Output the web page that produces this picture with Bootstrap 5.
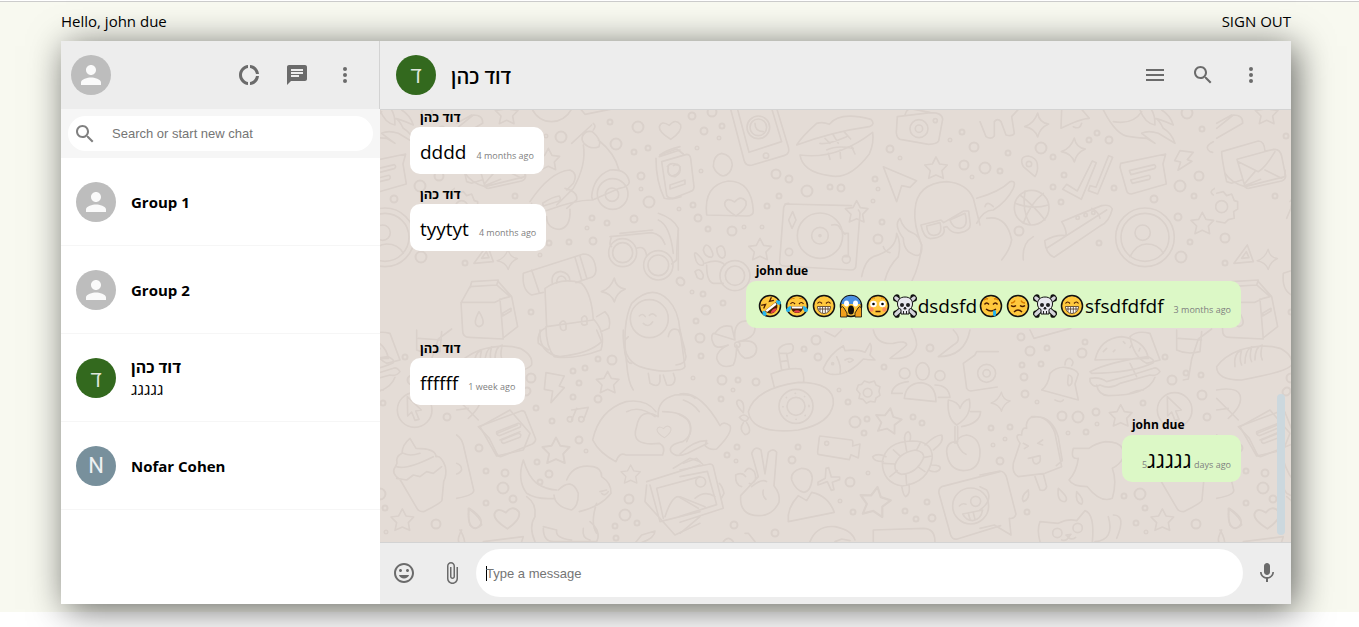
<!DOCTYPE html>
<html lang="en">
<head>
<meta charset="utf-8">
<meta name="viewport" content="width=device-width, initial-scale=1">
<title>Chat</title>
<link href="https://cdn.jsdelivr.net/npm/bootstrap@5.3.0/dist/css/bootstrap.min.css" rel="stylesheet">
<style>
  body { font-family: "Open Sans", "Noto Sans", "Liberation Sans", sans-serif; color: #000; background: #fff; height: 100vh; overflow: hidden; padding-top: 1px; }
  .page-band { background: #f8f9f0; border-top: 1px solid #ccc; padding: 0 68px 8px 61px; }
  .top-line { height: 39px; font-size: 15px; }
  .top-line a { color: #000; }
  .chat-app { height: calc(100vh - 64px); box-shadow: 5px 5px 34px rgba(0, 0, 0, .6); background: #ededed; }
  .side-pane { flex: 0 0 319px; }
  .side-head { height: 68px; padding: 0 10px; border-right: 1px solid #d3d3d3; background: #ededed; }
  .icon-btn { width: 48px; height: 48px; padding: 12px; border: 0; background: none; color: #6b6b6b; line-height: 0; }
  .icon-btn svg, .search-box svg { width: 24px; height: 24px; fill: currentColor; }
  .face { width: 40px; height: 40px; flex: none; background: #bdbdbd; color: #fafafa; }
  .face svg { width: 30px; height: 30px; fill: currentColor; }
  .face-green { background: #33691e; color: #dfe6dc; font-size: 22px; }
  .face-blue { background: #78909c; color: #eef1f3; font-family: Roboto, sans-serif; font-size: 22px; }
  .search-row { background: #f6f6f6; padding: 7px; height: 49px; }
  .search-box { color: #808080; padding-left: 5px; }
  .plain-input { border: 0; outline: 0; background: none; font-family: "Liberation Sans", Arial, sans-serif; font-size: 13px; min-width: 0; color: #000; }
  .plain-input::placeholder { color: #757575; opacity: 1; }
  .search-box .plain-input { margin-left: 13px; }
  .contact { height: 88px; padding: 0 15px; gap: 15px; border-bottom: 1px solid #f6f6f6; color: #000; text-decoration: none; font-size: 15px; line-height: 22px; }
  .contact :lang(he) { font-size: 16px; }
  .talk-head { height: 69px; padding: 0 16px; border-bottom: 1px solid #d3d3d3; }
  .talk-head h1 { font-size: 20px; margin: 4px 0 0 15px; }
  .talk { background: #e4dcd6; min-height: 0; }
  .doodles { inset: 0; width: 100%; height: 100%; }
  .messages { padding: 0 50px 60px 30px; gap: 10px; min-height: 0; }
  .sender { font-size: 12px; font-weight: 700; line-height: 20px; padding-left: 10px; }
  .sender:lang(he) { font-size: 13px; }
  .bubble { height: 47px; padding: 10px; border-radius: 10px; background: #fff; font-size: 19px; line-height: 30px; margin: 0; white-space: nowrap; }
  .bubble:lang(he) { font-size: 22px; line-height: 28px; }
  .bubble time { font-size: 9px; color: #808080; margin-left: 10px; }
  .mine .bubble { background: #dcf8c6; }
  .emo { width: 24px; height: 24px; margin: 0 1px 0 2px; vertical-align: -5px; }
  .thumb { right: 6px; bottom: 7px; width: 8px; height: 141px; border-radius: 4px; background: #ccd8de; }
  .composer { height: 62px; padding-bottom: 1px; border-top: 1px solid #d3d3d3; }
  .composer .plain-input { height: 48px; border-radius: 30px; background: #fff; padding: 0 10px; }
  .composer .plain-input:placeholder-shown { background: linear-gradient(#000, #000) 10px 50% / 1px 15px no-repeat #fff; caret-color: transparent; }
</style>
</head>
<body>
<svg width="0" height="0" class="position-absolute" aria-hidden="true">
  <defs>
    <symbol id="i-person" viewBox="0 0 24 24"><path d="M12 12c2.21 0 4-1.79 4-4s-1.79-4-4-4-4 1.79-4 4 1.790 4 4 4zm0 2c-2.670 0-8 1.340-8 4v2h16v-2c0-2.660-5.330-4-8-4z"/></symbol>
    <symbol id="i-donut" viewBox="0 0 24 24"><path d="M11 5.080V2c-5 .5-9 4.810-9 10s4 9.500 9 10v-3.080c-3-.48-6-3.400-6-6.920s3-6.440 6-6.920zM18.970 11H22c-.47-5-4-8.530-9-9v3.080C16 5.510 18.540 8 18.970 11zM13 18.920V22c5-.47 8.530-4 9-9h-3.030c-.43 3-2.970 5.490-5.970 5.920z"/></symbol>
    <symbol id="i-chat" viewBox="0 0 24 24"><path d="M20 2H4c-1.100 0-1.990.9-1.990 2L2 22l4-4h14c1.100 0 2-.9 2-2V4c0-1.100-.9-2-2-2zM6 9h12v2H6V9zm8 5H6v-2h8v2zm4-6H6V6h12v2z"/></symbol>
    <symbol id="i-more" viewBox="0 0 24 24"><circle cx="12" cy="6" r="2"/><circle cx="12" cy="12" r="2"/><circle cx="12" cy="18" r="2"/></symbol>
    <symbol id="i-search" viewBox="0 0 24 24"><path d="M15.500 14h-.79l-.28-.27C15.410 12.590 16 11.110 16 9.500 16 5.910 13.090 3 9.500 3S3 5.910 3 9.500 5.910 16 9.500 16c1.610 0 3.090-.59 4.230-1.570l.27.28v.79l5 4.990L20.490 19l-4.990-5zm-6 0C7.010 14 5 11.990 5 9.500S7.010 5 9.500 5 14 7.010 14 9.500 11.990 14 9.500 14z"/></symbol>
    <symbol id="i-menu" viewBox="0 0 24 24"><path d="M3 18h18v-2H3v2zm0-5h18v-2H3v2zm0-7v2h18V6H3z"/></symbol>
    <symbol id="i-smile" viewBox="0 0 24 24"><path d="M11.990 2C6.470 2 2 6.480 2 12s4.470 10 9.990 10C17.520 22 22 17.520 22 12S17.520 2 11.990 2zM12 20c-4.420 0-8-3.580-8-8s3.580-8 8-8 8 3.580 8 8-3.580 8-8 8zm3.500-9c.83 0 1.500-.67 1.500-1.500S16.330 8 15.500 8 14 8.670 14 9.500s.67 1.500 1.500 1.500zm-7 0c.83 0 1.500-.67 1.500-1.500S9.330 8 8.500 8 7 8.670 7 9.500 7.670 11 8.500 11zm3.500 6.500c2.330 0 4.310-1.460 5.110-3.500H6.890c.8 2.040 2.780 3.500 5.110 3.500z"/></symbol>
    <symbol id="i-clip" viewBox="0 0 24 24"><path d="M16.500 6v11.500c0 2.210-1.790 4-4 4s-4-1.790-4-4V5c0-1.380 1.120-2.500 2.500-2.500s2.500 1.120 2.500 2.500v10.500c0 .55-.45 1-1 1s-1-.45-1-1V6H10v9.500c0 1.380 1.120 2.500 2.500 2.500s2.500-1.120 2.500-2.500V5c0-2.210-1.790-4-4-4S7 2.790 7 5v12.500c0 3.040 2.460 5.500 5.500 5.500s5.500-2.460 5.500-5.500V6h-1.500z"/></symbol>
    <symbol id="i-mic" viewBox="0 0 24 24"><path d="M12 14c1.660 0 2.990-1.340 2.990-3L15 5c0-1.660-1.340-3-3-3S9 3.340 9 5v6c0 1.660 1.340 3 3 3zm5.300-3c0 3-2.540 5.100-5.300 5.100S6.700 14 6.700 11H5c0 3.410 2.720 6.230 6 6.720V21h2v-3.280c3.280-.48 6-3.300 6-6.720h-1.700z"/></symbol>

    <symbol id="e-disc" viewBox="0 0 24 24"><circle cx="12" cy="12" r="10.500" fill="#ffc83d" stroke="#111" stroke-width="1.500"/></symbol>
    <symbol id="e-rofl" viewBox="0 0 24 24"><use href="#e-disc"/><g transform="rotate(-38 12 12)"><path d="M5 12.500h14c0 4-3 7-7 7s-7-3-7-7z" fill="#4b1c00"/><path d="M5.500 12.500h13l-.6 2.500H6z" fill="#fff"/><path d="M8 18q4-3 8 0-4 3-8 0z" fill="#e8434c"/><path d="M5.500 6l4 2-4 2M18.500 6l-4 2 4 2" fill="none" stroke="#4b1c00" stroke-width="1.300"/><path d="M1 14q3-5 4 0 0 3-2 3T1 14zM23 14q-3-5-4 0 0 3 2 3t2-3z" fill="#26b5ef"/></g></symbol>
    <symbol id="e-joy" viewBox="0 0 24 24"><use href="#e-disc"/><path d="M6 12.500h12c0 4-2.500 6.500-6 6.500s-6-2.500-6-6.500z" fill="#4b1c00"/><path d="M6.500 12.500h11l-.5 2H7z" fill="#fff"/><path d="M8.500 17.500q3.500-2.500 7 0-3.500 2.500-7 0z" fill="#e8434c"/><path d="M5.500 10q2-3 4.500 0M14 10q2.500-3 4.500 0" fill="none" stroke="#4b1c00" stroke-width="1.200"/><path d="M5.500 5.500q2-2 4-1M18.500 5.500q-2-2-4-1" fill="none" stroke="#d67d00"/><path d="M1 16q2-4 5-4 0 6-3 6-2 0-2-2zM23 16q-2-4-5-4 0 6 3 6 2 0 2-2z" fill="#26b5ef"/></symbol>
    <symbol id="e-grin" viewBox="0 0 24 24"><use href="#e-disc"/><path d="M5.500 12.500h13c0 4.500-3 7-6.500 7s-6.500-2.500-6.500-7z" fill="#fff" stroke="#4b3420" stroke-width=".8"/><path d="M6 15h12M8 13v5M10.600 13v6M13.300 13v6M16 13v5" stroke="#4b3420" stroke-width=".8"/><path d="M5.500 9.500q2-3 4.500 0M14 9.500q2.500-3 4.500 0" fill="none" stroke="#4b1c00" stroke-width="1.200"/></symbol>
    <symbol id="e-scream" viewBox="0 0 24 24"><use href="#e-disc"/><path d="M2.300 10C3 4.500 7 1.800 12 1.800s9 2.700 9.700 8.200z" fill="#4a90e2"/><ellipse cx="7.500" cy="9.500" rx="2.500" ry="3" fill="#fff"/><ellipse cx="16.500" cy="9.500" rx="2.500" ry="3" fill="#fff"/><ellipse cx="12" cy="16" rx="3" ry="4.500" fill="#15100c"/><path d="M1.500 23v-9q2-3 3.500 0l3 5v4zM22.500 23v-9q-2-3-3.500 0l-3 5v4z" fill="#f2a01c" stroke="#111" stroke-width=".8"/></symbol>
    <symbol id="e-flush" viewBox="0 0 24 24"><use href="#e-disc"/><circle cx="7.500" cy="10" r="3.300" fill="#fff"/><circle cx="16.500" cy="10" r="3.300" fill="#fff"/><circle cx="7.500" cy="10" r="1.300"/><circle cx="16.500" cy="10" r="1.300"/><circle cx="5.500" cy="15.500" r="2.200" fill="#ff8a5c"/><circle cx="18.500" cy="15.500" r="2.200" fill="#ff8a5c"/><path d="M9.500 17.500h5" stroke="#4b1c00" stroke-width="1.500"/><path d="M5 5q2-2 4-1M19 5q-2-2-4-1" fill="none" stroke="#d67d00"/></symbol>
    <symbol id="e-skull" viewBox="0 0 24 24"><path d="M3 4l18 16M21 4L3 20" stroke="#111" stroke-width="5.500" stroke-linecap="round"/><g fill="#111"><circle cx="4" cy="2.800" r="2.600"/><circle cx="2.600" cy="5" r="2.500"/><circle cx="20" cy="2.800" r="2.600"/><circle cx="21.400" cy="5" r="2.500"/><circle cx="4" cy="21.200" r="2.600"/><circle cx="2.600" cy="19" r="2.500"/><circle cx="20" cy="21.200" r="2.600"/><circle cx="21.400" cy="19" r="2.500"/></g><path d="M3 4l18 16M21 4L3 20" stroke="#d6d6dc" stroke-width="3.500" stroke-linecap="round"/><path d="M12 3c5 0 7.500 3 7.500 7 0 3-1.500 4.500-3.500 5.500V20H8v-4.500C6 14.500 4.500 13 4.500 10c0-4 2.500-7 7.500-7z" fill="#e9e9ee" stroke="#111" stroke-width="1"/><circle cx="9" cy="11" r="2" fill="#222"/><circle cx="15" cy="11" r="2" fill="#222"/><path d="M12 13l1.200 2h-2.400zM10.500 17v3M13.500 17v3" stroke="#222"/></symbol>
    <symbol id="e-drool" viewBox="0 0 24 24"><use href="#e-disc"/><path d="M5.500 10.500q2-3 4.500 0M14 10.500q2.500-3 4.500 0M7 15q5 4 10 0" fill="none" stroke="#4b1c00" stroke-width="1.400"/><path d="M5 6q2-2 4-1M19 6q-2-2-4-1" fill="none" stroke="#d67d00" stroke-width="1.400"/><path d="M14 16.500h3v4.500q-1.500 2.500-3 0z" fill="#26b5ef"/></symbol>
    <symbol id="e-sad" viewBox="0 0 24 24"><use href="#e-disc"/><path d="M5 11.500q2.500 2 5 0M14 11.500q2.500 2 5 0M8 18q4-4 8 0" fill="none" stroke="#4b1c00" stroke-width="1.400"/><path d="M5 9q3 0 4-2.500M19 9q-3 0-4-2.500" fill="none" stroke="#d67d00" stroke-width="1.400"/></symbol>

    <path id="d-star" d="M0-33L11-12 34-9 18 8 22 31 0 21-22 31-17 8-34-9-11-12z"/>
    <path id="d-spark" d="M3-36Q8-6 36-3 10 8 3 36-6 10-36 5-8-4 3-36z"/>
    <path id="d-heart" d="M2 28Q-34 6-32-10-26-30-2-14 16-36 32-16 38 4 2 28z"/>
    <path id="d-r6" d="M561 137h0M616 144h0M638 127h0M649 202h0M807 191h0M1041 148h0M985 168h0M1180 186h0M1187 113h0M1181 257h0M855 422h0M503 488h0M625 515h0M1078 417h0M1140 494h0"/>
    <path id="d-r5" d="M712 112h0M776 174h0M974 147h0M964 165h0M732 231h0M878 239h0M1019 231h0M1199 176h0M700 338h0M722 380h0M816 340h0M850 482h0M531 378h0M612 360h0M629 499h0M1030 351h0M1082 353h0M1062 416h0M1172 380h0M1202 395h0M1196 524h0M706 310h0M465 238h0"/>
    <path id="d-r4" d="M641 176h0M634 219h0M593 241h0M692 116h0M704 131h0M789 179h0M841 188h0M890 149h0M698 218h0M681 282h0M1109 140h0M1154 199h0M1178 217h0M756 382h0M818 357h0M930 348h0M792 460h0M932 518h0M734 525h0M775 533h0M527 391h0M598 399h0M479 448h0M505 473h0M513 499h0M579 440h0M549 474h0M1021 337h0M1024 377h0M1025 394h0M1096 412h0M1000 461h0M1207 417h0M680 281h0M526 392h0"/>
    <path id="d-r3" d="M610 122h0M634 152h0M648 148h0M592 218h0M607 223h0M549 243h0M569 242h0M515 196h0M526 136h0M722 126h0M830 187h0M779 196h0M875 179h0M962 132h0M693 205h0M708 229h0M767 206h0M703 294h0M882 222h0M1008 153h0M1053 157h0M1089 140h0M1097 133h0M1064 175h0M1000 171h0M1053 187h0M1061 202h0M1099 243h0M1114 188h0M1194 196h0M1202 129h0M1190 242h0M701 356h0M738 380h0M721 399h0M804 349h0M848 402h0M884 367h0M867 419h0M864 433h0M913 417h0M922 423h0M737 447h0M727 455h0M798 447h0M853 512h0M905 511h0M916 519h0M927 502h0M991 428h0M536 408h0M552 421h0M573 371h0M585 368h0M598 359h0M579 383h0M573 397h0M486 471h0M486 503h0M537 462h0M540 482h0M637 523h0M615 526h0M616 538h0M1047 348h0M1022 365h0M1041 364h0M1085 342h0M1086 432h0M1010 427h0M1143 403h0M1186 373h0M1201 375h0M1165 357h0M1124 496h0M1145 508h0M1136 523h0M1027 512h0M465 263h0M531 312h0M696 321h0M723 303h0"/>
    <path id="d-r2" d="M641 189h0M587 228h0M546 136h0M719 138h0M697 148h0M701 171h0M878 189h0M900 158h0M950 140h0M972 177h0M679 209h0M744 227h0M762 227h0M692 292h0M873 201h0M693 378h0M733 390h0M839 390h0M736 461h0M840 501h0M868 473h0M993 445h0M586 451h0M1037 402h0M1097 424h0M1068 433h0M1005 439h0M1146 532h0M540 255h0"/>

    <pattern id="wall" x="75" y="-1" width="760" height="520" patternUnits="userSpaceOnUse">
      <g transform="translate(-455 -109)" fill="none" stroke="#dad1cb" stroke-linejoin="round" stroke-linecap="round">
        <use href="#d-r6" stroke-width="13"/><use href="#d-r6" stroke-width="9" stroke="#e4dcd6"/>
        <use href="#d-r5" stroke-width="11"/><use href="#d-r5" stroke-width="7" stroke="#e4dcd6"/>
        <use href="#d-r4" stroke-width="9"/><use href="#d-r4" stroke-width="5" stroke="#e4dcd6"/>
        <use href="#d-r3" stroke-width="7"/><use href="#d-r3" stroke-width="3" stroke="#e4dcd6"/>
        <use href="#d-r2" stroke-width="5"/><use href="#d-r2" stroke-width="2" stroke="#e4dcd6"/>
        <!-- scooter, mug, backpack, hooded figure, glasses -->
        <g transform="translate(380 30) scale(.3333)" stroke-width="5">
          <use href="#d-star" x="380" y="250"/><use href="#d-star" x="505" y="388"/>
          <path d="M455 235q20 40 60 40 40-2 60-38M600 235l15 18 90-18"/>
          <path d="M575 340l60-55M640 280q10 8 0 20M607 320q8-20 30-15 30 25 20 45-25 10-45-10-8-10-5-20zM610 345q10 60-30 130l-50 50M655 330q50 40 62 90M635 500q5-60 55-80 50-5 58 35 0 15-30 20l-80 35zM450 515q60-90 120-95 25 10 10 40l-20 20M455 520q-10 40 50 20 80-30 130-30M555 475q40 10 35 35l-30 25M488 520q30-20 50-22 10 15-10 18l-38 12zM500 560q0 35 38 38 35-5 32-60"/>
          <circle cx="698" cy="492" r="46"/><circle cx="696" cy="494" r="20"/>
          <path d="M838 380l62-20M828 385q0 70 25 120 20 5 50-5M840 375q20-15 60-25M862 410q10-15 30-5M865 410q-5 30 20 30 20-10 15-30"/>
          <path d="M835 550q45 15 60 45v125M835 570q35 15 45 100M695 620q-10 25 0 30M690 620l125-12q30 5 40 35M720 610l98-10"/>
          <circle cx="728" cy="668" r="42"/><circle cx="728" cy="668" r="30"/><circle cx="835" cy="706" r="44"/><circle cx="835" cy="706" r="31"/><path d="M770 655q25-10 30 22M895 600q-5 50-5 90l-15 12"/>
          <path d="M255 430q20 30 60 40l120-30v-20M312 468l50-20M282 700l40-55 18 50zM305 685l14-20 8 18z"/>
        </g>
        <g transform="translate(380 170) scale(.3333)" stroke-width="5">
          <use href="#d-spark" transform="translate(382 268) scale(.85)"/><use href="#d-spark" x="700" y="360"/>
          <path d="M430 310l180-58q35 0 38 50-2 20-20 22l-40 14M430 310q-5 50 25 65l35-8M455 300l22 65M585 262l20 68M600 258l20 65M517 340q-5-32 25-36 28 5 28 30M530 340q0-20 14-22 14 2 14 16M495 355q50-35 110-15 30 30 35 110L500 470zM500 470l-2 0q0 60 25 90 60 10 140-20 15-50-20-90M495 475q-25 10-20 45l30 20M650 440l25-15q20 20 12 50l-25 10M540 460q10-15 18 0v18q-10 8-16-2zM605 445q10-15 16 0v18q-10 6-16-2z"/>
          <path d="M740 580q-15-120 15-180 60-60 110-10 30 30 35 90l18 80q0 20-30 25M745 500q-18 10-10 50 5 30 20 30M740 580q5 60 20 80M865 500q5-30 30-20 10 20 20 60"/><circle cx="808" cy="446" r="57"/><path d="M778 438q10-10 18 2M808 436q10-10 20 2M790 460q15 15 28-4"/>
          <path d="M945 260q-5-20 10-5 20 20 15 30-20 5-25-25zM970 240q5-25 20-8 15 25 5 30-20 0-25-22zM1010 235q15-15 22 0 10 25-5 30-15-5-17-30zM945 305q15-15 25 10 0 20-18 8zM975 280q40-15 60 5M980 285q0 50 20 55h30"/><circle cx="1065" cy="317" r="45"/><circle cx="1065" cy="317" r="29"/>
          <path d="M245 395l25-45 80-5 5-15-80 5-5 18M350 345l40 35-20 5-25 12-102 0 5 85q0 20 20 20l102 5-10-120M355 335l40 45 18 90-45 35M297 425q25 40 0 45-22-5 0-45zM368 430l25-15v8l-25 15z"/>
          <path d="M1005 490q20-30 50-20 5 20 10 40M1065 510q-5-45 20-55 40-10 40 20 0 30-50 40 50-10 55 20 0 30-35 30-20-10-25-40 0 40-10 60-40 15-50-20 0-25 35-40-40 15-45-5-10-20 0-30z"/><circle cx="1072" cy="524" r="8"/>
        </g>
        <!-- phone, lips, camera, turntable -->
        <g transform="translate(660 100) scale(.3333)" stroke-width="5">
          <use href="#d-heart" x="30" y="90"/><use href="#d-heart" x="226" y="320" /><use href="#d-star" x="828" y="204"/><use href="#d-star" x="590" y="335"/><use href="#d-star" x="300" y="448"/>
          <path d="M210 20l42 160q5 20 25 15l95-28q20-5 12-30L350 25M232 25l35 132 98-32-30-100"/><circle cx="295" cy="82" r="34"/><circle cx="295" cy="82" r="25"/><circle cx="318" cy="167" r="8"/><path d="M285 70q0 25 25 25"/>
          <path d="M410 135q15-25 60-65 20-5 38 3 30-40 125-15 15 15-5 22Q520 95 410 135zM420 165q110 15 218-68 5 30-10 65-60 80-120 65-80-10-88-62zM495 115l15 15M520 105l15 25M552 95l20 22M480 130q20 5 80-20M505 160l5 18M540 150l2 25M575 140l10 22M500 150q30-15 80-5"/>
          <path d="M712 50l100-12q35 0 36 20l-12 65q-5 10-30 10l-85-15q-10-2-12-20zM735 45q5-20 20-18l55 10"/><circle cx="777" cy="86" r="27"/><circle cx="777" cy="86" r="11"/><circle cx="826" cy="62" r="6"/>
          <path d="M670 200l100 42-20 20-25-5-15 48zM5 185l75-22q10 0 12 12l10 85q0 12-12 15l-50 20q-18 0-20-10zM0 165l50-18 20 15M25 205q-5 25 15 22 20-5 20-25-5-15-20-5M30 255l45-15v12l-45 15z"/>
          <path d="M160 200q0-35 25-40 30 5 32 35-5 30-28 33-20-5-29-28zM140 345q-10-90 65-102 70 0 75 90 0 15-20 15z"/>
          <path d="M375 312l200 5M595 330q5 5 5 10l-12 155q0 15-15 15l-200-12q-15 0-14-15l12-160q3-13 15-13M398 335l10 25-12 25-10-25zM550 400h15v70h-15M515 375q20-5 25 10l15 18"/><circle cx="480" cy="407" r="68"/><circle cx="480" cy="407" r="25"/><circle cx="480" cy="407" r="3"/><circle cx="387" cy="456" r="11"/><circle cx="559" cy="478" r="12"/>
          <path d="M765 330q5-80 95-85 60 5 80 50l20 80M765 330q-5 40 20 105-5 60-30 110M783 375l60-15 8 8 60-35 15 0 5 40q0 20-30 25-25 5-40-18l-10 2q10 30-40 34-20-2-28-41zM800 378l40-10q10 40-20 38-18 0-20-28zM870 360l45-20q12 40-15 45-22 0-30-25z"/>
          <path d="M720 355q-20 20 10 60 0 25 15 40 45 30 40-20-10-30-25-35-30-10-40-45zM605 530q10-50 35-60 70-20 70-70 15 30 5 70-30 30-40 70M670 440q5 15 20 18"/>
        </g>
        <!-- bell, bird, sneaker, avatar, basketball -->
        <g transform="translate(980 0) scale(.3333)" stroke-width="5">
          <use href="#d-spark" x="170" y="375"/><use href="#d-spark" x="280" y="450"/><use href="#d-star" x="667" y="670"/>
          <path d="M0 365l18 45q15 10 25-2V365q10-12 20 0l15 40q20 5 25-5l-8-50 20-22M245 330l-2 55q60-30 85-30l-30-35M280 380q20 10 25-10"/>
          <path d="M370 330q40 80 80 80 35 5 50 5l25 15-40-30q20-10 50 0 50 30 50 30-10-30-35-45-15-30-25-30 10 0 55 20-10-30-35-45M400 365q60 10 85-30M480 330q15 40 45 45 0-30-10-45"/>
          <path d="M165 530l-35-30q-15-30 15-32 25 5 27 25 3 20-7 37z"/><circle cx="147" cy="492" r="8"/>
          <path d="M248 568l12-15 32 20 45-90 12 5-45 110zM325 572l5-15 18 5 38-95 12 5-45 110z"/>
          <path d="M422 490l135-28-8 30 10 60-105 30q-12 0-14-10l-20-70zM448 512l75-18q8 5 0 12l-70 18zM452 540l55-14q8 5 0 12l-50 12zM600 452l40 5-18 22 14 5-42 27 8-25-18-4zM-10 595q70-20 100-50 20-5 10 20-20 40-60 65-30 0-50 40M15 620q5-20 25 0"/>
          <circle cx="155" cy="623" r="52"/><path d="M105 610q50 20 100 5M120 585q40 30 75 75M135 573q-10 60 15 100M190 580q-40 30-60 90"/>
          <path d="M245 665q60-25 120-48 25-5 32 10-10 40-35 50l-140 95q-25-10-28-50 35-20 65-15 0-20-14-42zM200 745l180-115M335 625q20 10 25 30"/><circle cx="293" cy="653" r="5"/><circle cx="317" cy="645" r="5"/><circle cx="340" cy="638" r="5"/>
          <circle cx="495" cy="712" r="88"/><circle cx="495" cy="712" r="72"/><circle cx="488" cy="698" r="23"/><path d="M450 770q20-38 50-38 35 0 50 28M20 655q60-10 75 65-5 30-30 60M160 710q-35 20-30 70M700 425q-30 15-10 30l8 2M710 330l10 15M705 565q-20 10-5 20"/>
        </g>
        <!-- left edge of the tile: clip, letters, cog, bread, cupcake -->
        <g transform="translate(220 0) scale(.3333)" stroke-width="5">
          <path d="M710 385l50-40q30 0 28 25l-78 45M710 370l45-25M725 455l110-32q18 0 20 30l30-5q15 0 20 20l12 60q0 10-12 15l-100 22q-10 0-12-12l-22-75 110-30M725 455q0 20 15 90l15 5 30-10M775 485l60 30q20-10 50-60M795 550l30-35M855 510l50 25"/>
          <circle cx="725" cy="620" r="18"/><path d="M710 580l20-5 10 12 15-5 8 20 10 3v22l-12 8 2 20-18 4-10 10-25-5M920 655l15-35"/>
        </g>
        <g transform="translate(220 330) scale(.3333)" stroke-width="5">
          <path d="M710 110q20-30 70-50 70-20 120-5 40 20 35 50-10 20-150 45-75 0-75-40zM765 110q-5-40 20-50-8 30 0 45M795 100q0-40 20-50-8 30 0 45M825 90q0-40 22-45-8 30 0 45M710 180q60-10 70 15 10 30-35 70M710 205l65 65M710 240l35-5M780 290l90-50 60 70-20 50-80 18zM832 310l60-25M840 330l60-25M710 315q15 10 20 30l30 130q10 20-50 30M710 400q15 5 15 20-5 10-15 12M748 535q60 40 20 60-30-5-20-60M720 600q25 40 5 60M790 635l120-15-20 60z"/>
        </g>
        <g transform="translate(1140 330) scale(.3333)" stroke-width="5">
          <circle cx="104" cy="240" r="52"/><path d="M82 200l42 40-17 3 10 25-12 3-10-25-12 12z"/>
          <path d="M90 325l18 30q60 0 60 25 15-5 28 30 5 25-5 45l-5 55q0 8-55 35-15 0-20-10l-50-85q-30-20-15-40l5-10q-5-20 15-30 0-25 24-45zM70 370q20 10 50 0M50 410q30 10 110-30M50 445l30 5 20-15 20 5 20-15 20 5 25-20M-30 370h-10"/>
          <use href="#d-star" transform="translate(67 570)"/>
          <path d="M-30 20q20-20 60-10l30 80-40 10q-40-20-50-80M130 150l15-3 10-60 20-60 40-30M-30 100l20 40M-30 190q20-10 40-10"/>
        </g>
        <g transform="translate(380 330) scale(.3333)" stroke-width="5">
          <use href="#d-star" x="683" y="157"/><use href="#d-star" transform="translate(528 362) scale(1.200)"/><use href="#d-star" transform="translate(752 433) scale(.85)"/><use href="#d-heart" transform="translate(380 564) scale(1.150)"/><use href="#d-heart" transform="translate(852 305) scale(.65)"/>
          <path d="M480 0q-5 70 60 80 90-10 125-45L650 0M730 0q-5 90 50 110 60 20 110 10 20 0 25-10l-15-110M805 130l5 30q25 15 30-5v-20M850 135l10 30q25 5 25-20l-5-15M498 128l55 10-15 30 15 5-40 45 5-35-25-5zM575 240l50-8-15 40M590 235l-15 35"/><circle cx="570" cy="268" r="8"/><circle cx="604" cy="268" r="8"/>
          <path d="M295 290l130-48q10 0 12 10l30 75q0 10-10 15l-95 38q-8 0-12-10l-22-45zM350 305l65-25q12 2 5 12l-62 25q-10-2-8-12zM365 330l50-20q12 2 5 12l-48 18q-10-2-7-10z"/>
          <path d="M638 330q20-90 100-115 60-10 90 30M740 245q40-20 85 15M770 290q10-60 65-30-5-50 50-65 50-5 60 10M638 330q20 40 70 65 10-30 30-20h110q10-25-10-35-90 10-68-50M848 245q60 0 80 30 15 40-20 60-45 10-35 30 15 20 50 5l60-30"/>
          <path d="M430 390q-20 60 10 100 30 20 85 15M430 390q15 50 40 70 30 20 60 20M535 480q40-40 60 10 0 40-20 50-50-10-53-45M560 450q20-50 80-40 25 5 25 30 30 20 28 50-30 40-95 55M440 500q30 20 25 60-20 30 0 75M490 590l40 10q-5 25 45 30M490 595q0 40 30 40h130q15-30-20-60M610 595q-5 30 20 35M650 520q-20 60 0 90M660 485l20-5M665 490q10 10 20-5"/>
          <path d="M800 465l-5 50 90 100 75-35M800 455l160-50M810 465l30 110 120-30M830 475l20 90M830 475l130-35M855 560q20-60 40-60l60 35M880 415l50-30 30 10M265 535q40 30 40 50-20 20-35 0-5-20-5-50zM245 600q-20 40 0 40M765 640l20-25 40-12q0 20-40 35"/>
        </g>
        <!-- submarine, fish, group, turtle, victory hand, sprout -->
        <g transform="translate(680 330) scale(.3333)" stroke-width="5">
          <use href="#d-star" transform="translate(625 272) rotate(10) scale(1.150)"/><use href="#d-star" transform="translate(585 515) rotate(10) scale(1.350)"/>
          <path d="M205 245q20-70 150-88 110 0 105 65-10 60-105 78-140 15-150-55zM283 172l-10-40q50-20 90-15 10 15 8 38M305 120l-10-60q10-20 40-18 10 10 0 25l-15 5 8 45M298 70l22 0M302 95l20-3M190 248q-30-30-15-38 20 0 15 38zM190 278q-15 20 5 36 25-5 5-36M178 262q15-15 28 2-10 20-28-2z"/><circle cx="348" cy="229" r="51"/><circle cx="348" cy="229" r="27"/><circle cx="348" cy="229" r="39" stroke-dasharray="1 29"/>
          <path d="M430 115q20-45 60-68l5 15q40-5 60 5l15-27q8 10 0 35l15 15q-20 0-35-3-50 55-100 45-20-5-20-17zM470 80q15 30 10 50M495 90q15-10 25 0-10 10-15 5"/><circle cx="458" cy="101" r="3"/>
          <circle cx="674" cy="130" r="16"/><ellipse cx="728" cy="124" rx="20" ry="26"/><circle cx="780" cy="137" r="15"/><path d="M673 205q5-45 50-47 45 5 45 57zM635 190q5-30 50-35M635 190l32 0M765 165q40 0 45 37l-35 0"/>
          <path d="M535 165l10-2 8-10 15 5 15-5 5 12 12 5-3 14 3 12-12 8-3 12-14-2-12 6-10-12-12-3 3-14-10-12z"/><circle cx="563" cy="188" r="13"/>
          <path d="M420 318l95 12q5 0 3 18l22-6-5 42-22-10-5 15-90-15q-6 0-5-10l5-42z"/><circle cx="440" cy="340" r="6"/>
          <path d="M607 395q10-60 90-62 60 0 60 50-10 75-90 85-60-10-60-73zM645 405q10-35 60-45 30 5 25 25-20 45-65 48-22-5-20-28zM612 400l32 2M640 360l20 18M675 335l5 28M720 340l-10 20M755 378l-25 5M735 425l-22-15M680 465l-2-30M630 440l22-18M675 335q-5-25 10-30 10 5 5 28M735 345q30-30 50-30 10 20-25 45M755 405q30 0 25 12-10 15-35 3M665 468q5 30 12 32 15-5 10-38M610 395q-30 0-32-15 15-12 40 0"/>
          <path d="M235 440l-20-70q10-25 28-10l12 72 10-65q15-15 25 0l-8 100q20 25 15 50-20 40-60 40-60 0-55-60zM215 470q30-25 45-15M250 480q-5 15 8 28M185 470q-20-5-18-35 20-10 30 5M195 425q10-20 28 0 8 20 0 30-10 10-15 5M335 450q-5-25 30-35 30 0 32 30-5 40-25 42-25-5-37-37zM325 575q-5-40 30-78l25 15 15-25q50 10 68 60zM438 415l8-2 8 28 25 0 0 8-22 8 5 22-8 2-12-26-28 10 0-8 22-12z"/>
          <path d="M830 285q-30-20-25-75 30 5 35 25 10-25 28-28 10 50-38 78zM845 290q55-10 57-45l-30 0M825 290v50M833 290v45M830 335q-30 0-30 30 5 55 50 57 50 0 50-55 0-45-40-52-30 5-30 25M830 335q10 30 28 38"/>
          <path d="M850 100l35-25 5-10 65 0M850 100l10 75q5 8 12 8l80-12"/><circle cx="920" cy="130" r="27"/><circle cx="920" cy="130" r="11"/>
          <path d="M580 0q10 45 60 40 40-10 40 5-10 10-50 40 70 5 80-40 0-20-15-50M820 0q30 30 0 45l-45 35q80 0 95-80M435 5l30 15 20-20M0 192q60-10 120 95 10-15 30 0 10 20-40 70-20 5-35-10l5-15q-40 0-80 40M10 210q30 10 48 35M0 255q50 20 20 80M0 420l90-18q8 0 10 8l30 125-130 42M0 440l82-16 28 100-110 35M0 500l75 30M45 505q30-25 60-5M0 610l60-50M10 400l40-15 20 20M118 460q10 10 14 30l-8 15M130 635q15-20 30 0M195 610l10 0 20 25M390 635q20-50 75-45 50 10 60 40M465 635l20-8 25 5M580 635v-35l150-5q35 0 35 40"/><circle cx="62" cy="456" r="15"/>
          <path d="M960 425l-175 45q-10 5-8 20l35 125q5 15 20 12l130-40"/><circle cx="872" cy="528" r="54"/><circle cx="887" cy="514" r="15"/><path d="M838 528q10-10 20-5M848 552l60-12q-5 30-30 32-20 0-30-20zM865 550l5 18M880 548l5 20"/>
        </g>
        <!-- burger, bell, ice lolly, cat -->
        <g transform="translate(980 330) scale(.3333)" stroke-width="5">
          <use href="#d-spark" transform="translate(62 215) scale(.8)"/><use href="#d-star" transform="translate(422 257)"/>
          <path d="M345 90q15-65 80-70 70 10 80 65zM330 125q60-30 175-45 20 10 15 18-60 30-185 32zM330 145q30-5 50 10 80-20 140-40 10-5 20 10-10 15-30 10l-90 25q-30 20-60 5-20 10-30-10zM350 165q5 30 35 32 120 0 140-55"/><path d="M380 55l-10 10M405 60l-5 5M430 35l5 5M455 45l-5 8M480 55l-3 8" />
          <path d="M185 180q20-15 25-50 20-20 45-18 35 5 40 20l-10 30 10 48zM255 105q0-20 15-20 15 10 5 22M225 210q20 10 25 0M265 135q15 0 10 25-10 15-12-2zM150 0l12 25 110-30M590 0l0 60q30 15 70 5l5-60M595 25l70 5M740 0l25 20 80 0 30-30"/>
          <path d="M100 400l20-60q-20-30 5-25 0-25 15-20-5-20 15-35 50-5 70 50l20 100-50 20-80 10q-20-10-15-40zM155 262q60-10 80 60l12 70-18 15M165 440l15 40q15 5 20-10l-10-38M130 340l15 8-12 8M188 330l-15 10 15 5M145 385l35-8q5 20-10 25-12 0-12-18"/>
          <path d="M280 355q-10 35 15 30-5 40-28 65 10 20 55 20 40 50 75 35 15-50 0-90 45-25 30-60-10-20-50-20-30 5-50 20zM0 435l60-12q15 2 20 20l28 110q-5 15-20 12l5 50-50-30-43 10M130 515q-10-15 15-35 5 30-15 35zM235 475q35 30 20 40-25 0-20-40zM290 485q25 25 15 38-20-5-15-38zM0 540q40-30 20-60l-20-10"/>
          <path d="M180 635q-10-35 0-60l55 5q30-15 55-8l25-30q30 10 22 95M400 555q40 0 10 70M385 560q20 70-40 75"/><circle cx="232" cy="609" r="14"/><circle cx="293" cy="594" r="14"/><path d="M258 615l15-2-7 8zM245 630q15 5 20-8 10 10 22 0"/>
        </g>
      </g>
    </pattern>
  </defs>
</svg>

<div class="page-band">
  <header class="top-line d-flex justify-content-between align-items-center position-relative z-1">
    <span>Hello, john due</span>
    <a href="#" class="text-decoration-none">SIGN OUT</a>
  </header>

  <main class="chat-app d-flex">
    <aside class="side-pane d-flex flex-column bg-white">
      <div class="side-head d-flex align-items-center">
        <span class="face rounded-circle d-flex align-items-center justify-content-center me-auto"><svg><use href="#i-person"/></svg></span>
        <button class="icon-btn" type="button" aria-label="Status"><svg><use href="#i-donut"/></svg></button>
        <button class="icon-btn" type="button" aria-label="New chat"><svg><use href="#i-chat"/></svg></button>
        <button class="icon-btn" type="button" aria-label="Menu"><svg><use href="#i-more"/></svg></button>
      </div>
      <div class="search-row">
        <label class="search-box bg-white rounded-pill d-flex align-items-center h-100">
          <svg aria-hidden="true"><use href="#i-search"/></svg>
          <input class="plain-input flex-fill" type="text" placeholder="Search or start new chat" aria-label="Search or start new chat">
        </label>
      </div>
      <nav aria-label="Chats">
        <a href="#" class="contact d-flex align-items-center">
          <span class="face rounded-circle d-flex align-items-center justify-content-center"><svg><use href="#i-person"/></svg></span>
          <strong>Group 1</strong>
        </a>
        <a href="#" class="contact d-flex align-items-center">
          <span class="face rounded-circle d-flex align-items-center justify-content-center"><svg><use href="#i-person"/></svg></span>
          <strong>Group 2</strong>
        </a>
        <a href="#" class="contact d-flex align-items-center">
          <span class="face face-green rounded-circle d-flex align-items-center justify-content-center">ד</span>
          <span class="d-flex flex-column"><strong lang="he">דוד כהן</strong><span lang="he">גגגגג</span></span>
        </a>
        <a href="#" class="contact d-flex align-items-center">
          <span class="face face-blue rounded-circle d-flex align-items-center justify-content-center">N</span>
          <strong>Nofar Cohen</strong>
        </a>
      </nav>
    </aside>

    <section class="d-flex flex-column flex-fill">
      <div class="talk-head d-flex align-items-center">
        <span class="face face-green rounded-circle d-flex align-items-center justify-content-center">ד</span>
        <h1 class="fw-semibold me-auto" lang="he">דוד כהן</h1>
        <button class="icon-btn" type="button" aria-label="Details"><svg><use href="#i-menu"/></svg></button>
        <button class="icon-btn" type="button" aria-label="Search"><svg><use href="#i-search"/></svg></button>
        <button class="icon-btn" type="button" aria-label="More"><svg><use href="#i-more"/></svg></button>
      </div>

      <div class="talk position-relative flex-fill overflow-hidden d-flex flex-column">
        <svg class="doodles position-absolute" aria-hidden="true"><rect width="100%" height="100%" fill="url(#wall)"/></svg>
        <div class="messages position-relative flex-fill d-flex flex-column justify-content-end">
          <div class="align-self-start"><div class="sender" lang="he">דוד כהן</div><p class="bubble">dddd<time>4 months ago</time></p></div>
          <div class="align-self-start"><div class="sender" lang="he">דוד כהן</div><p class="bubble">tyytyt<time>4 months ago</time></p></div>
          <div class="align-self-end mine"><div class="sender">john due</div><p class="bubble"><svg class="emo" role="img" aria-label="🤣"><use href="#e-rofl"/></svg><svg class="emo" role="img" aria-label="😂"><use href="#e-joy"/></svg><svg class="emo" role="img" aria-label="😁"><use href="#e-grin"/></svg><svg class="emo" role="img" aria-label="😱"><use href="#e-scream"/></svg><svg class="emo" role="img" aria-label="😳"><use href="#e-flush"/></svg><svg class="emo" role="img" aria-label="☠"><use href="#e-skull"/></svg>dsdsfd<svg class="emo" role="img" aria-label="🤤"><use href="#e-drool"/></svg><svg class="emo" role="img" aria-label="😔"><use href="#e-sad"/></svg><svg class="emo" role="img" aria-label="☠"><use href="#e-skull"/></svg><svg class="emo" role="img" aria-label="😁"><use href="#e-grin"/></svg>sfsdfdfdf<time>3 months ago</time></p></div>
          <div class="align-self-start"><div class="sender" lang="he">דוד כהן</div><p class="bubble">ffffff<time>1 week ago</time></p></div>
          <div class="align-self-end mine"><div class="sender">john due</div><p class="bubble" lang="he">גגגגג<time>5 days ago</time></p></div>
        </div>
        <div class="thumb position-absolute"></div>
      </div>

      <form class="composer d-flex align-items-center" onsubmit="return false">
        <button class="icon-btn" type="button" aria-label="Emoji"><svg><use href="#i-smile"/></svg></button>
        <button class="icon-btn" type="button" aria-label="Attach"><svg><use href="#i-clip"/></svg></button>
        <input class="plain-input flex-fill" type="text" placeholder="Type a message" aria-label="Type a message" autofocus>
        <button class="icon-btn" type="button" aria-label="Record"><svg><use href="#i-mic"/></svg></button>
      </form>
    </section>
  </main>
</div>
<script src="https://cdn.jsdelivr.net/npm/bootstrap@5.3.0/dist/js/bootstrap.bundle.min.js"></script>
</body>
</html>
